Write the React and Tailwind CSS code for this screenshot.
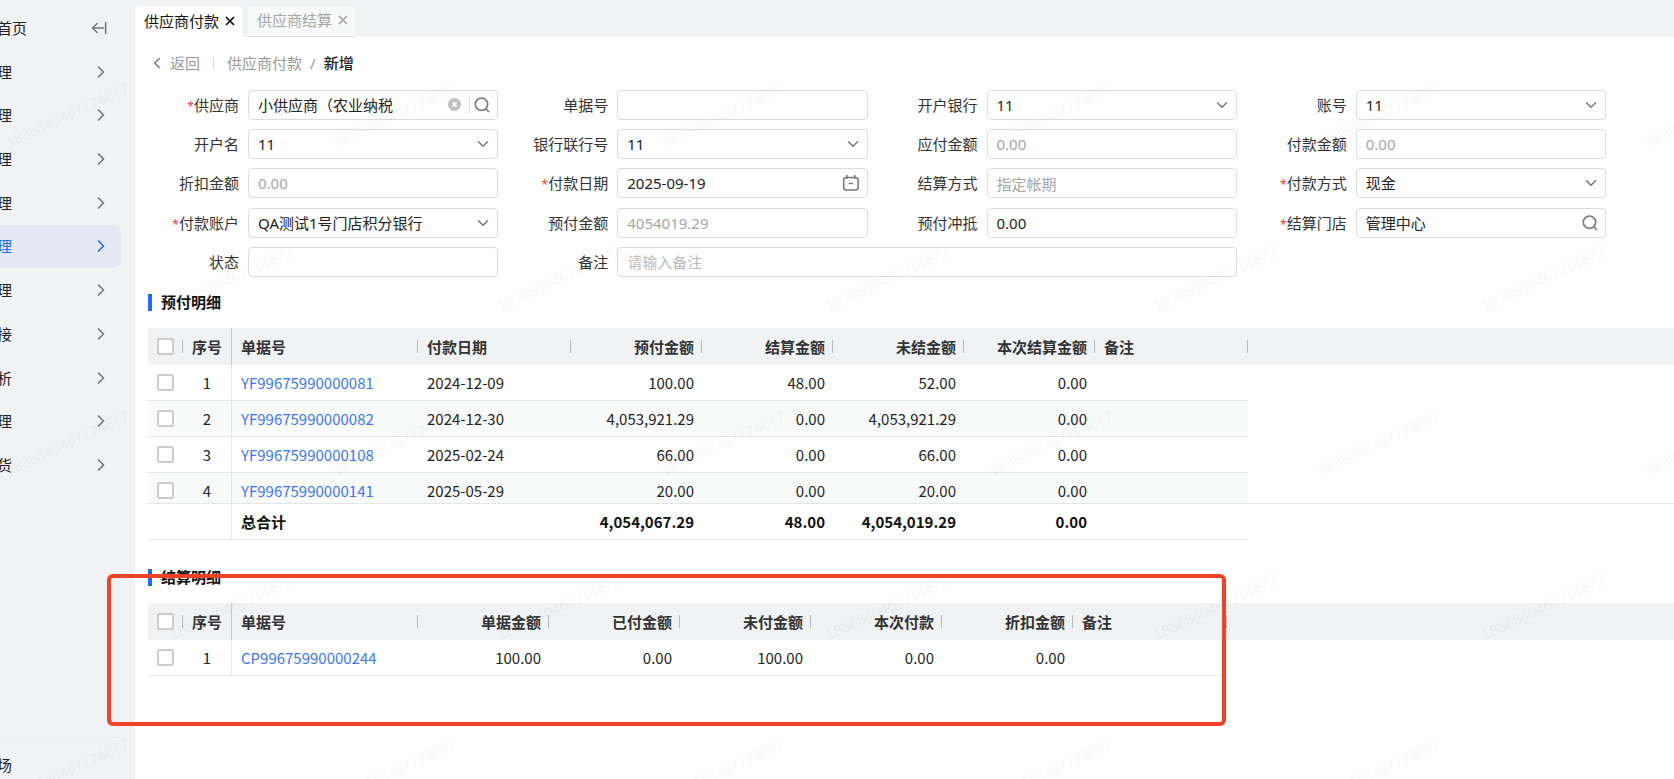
import React from "react";
import { ChevronDown, ChevronLeft, ChevronRight, X } from "lucide-react";

const menus = [
  { name: "首页", home: true },
  { name: "理" },
  { name: "理" },
  { name: "理" },
  { name: "理" },
  { name: "理", active: true },
  { name: "理" },
  { name: "接" },
  { name: "析" },
  { name: "理" },
  { name: "货" },
];

const fields = [
  { id: "supplier", label: "供应商", required: true, type: "search", value: "小供应商（农业纳税", clearable: true },
  { id: "billNo", label: "单据号", value: "", disabled: true },
  { id: "bank", label: "开户银行", type: "select", value: "11" },
  { id: "account", label: "账号", type: "select", value: "11" },
  { id: "accountName", label: "开户名", type: "select", value: "11" },
  { id: "bankCode", label: "银行联行号", type: "select", value: "11" },
  { id: "payable", label: "应付金额", value: "0.00", disabled: true },
  { id: "payAmount", label: "付款金额", value: "0.00", disabled: true },
  { id: "discount", label: "折扣金额", value: "0.00", disabled: true },
  { id: "payDate", label: "付款日期", required: true, type: "date", value: "2025-09-19" },
  { id: "settleType", label: "结算方式", value: "指定帐期", disabled: true },
  { id: "payType", label: "付款方式", required: true, type: "select", value: "现金" },
  { id: "payAccount", label: "付款账户", required: true, type: "select", value: "QA测试1号门店积分银行" },
  { id: "prepaid", label: "预付金额", value: "4054019.29", disabled: true },
  { id: "offset", label: "预付冲抵", value: "0.00" },
  { id: "store", label: "结算门店", required: true, type: "search", value: "管理中心" },
  { id: "status", label: "状态", value: "", disabled: true },
  { id: "remark", label: "备注", value: "", placeholder: "请输入备注", wide: true },
];

const prepayColumns = [
  { key: "no", title: "单据号", width: 186, link: true },
  { key: "date", title: "付款日期", width: 153 },
  { key: "prepay", title: "预付金额", width: 131, right: true },
  { key: "settled", title: "结算金额", width: 131, right: true },
  { key: "unsettled", title: "未结金额", width: 131, right: true },
  { key: "current", title: "本次结算金额", width: 131, right: true },
  { key: "remark", title: "备注", width: 153 },
];

const prepayRows = [
  { no: "YF99675990000081", date: "2024-12-09", prepay: "100.00", settled: "48.00", unsettled: "52.00", current: "0.00" },
  { no: "YF99675990000082", date: "2024-12-30", prepay: "4,053,921.29", settled: "0.00", unsettled: "4,053,921.29", current: "0.00" },
  { no: "YF99675990000108", date: "2025-02-24", prepay: "66.00", settled: "0.00", unsettled: "66.00", current: "0.00" },
  { no: "YF99675990000141", date: "2025-05-29", prepay: "20.00", settled: "0.00", unsettled: "20.00", current: "0.00" },
];

const prepayTotal = {
  no: "总合计",
  prepay: "4,054,067.29",
  settled: "48.00",
  unsettled: "4,054,019.29",
  current: "0.00",
};

const settleColumns = [
  { key: "no", title: "单据号", width: 186, link: true },
  { key: "amount", title: "单据金额", width: 131, right: true },
  { key: "paid", title: "已付金额", width: 131, right: true },
  { key: "unpaid", title: "未付金额", width: 131, right: true },
  { key: "current", title: "本次付款", width: 131, right: true },
  { key: "discount", title: "折扣金额", width: 131, right: true },
  { key: "remark", title: "备注", width: 154 },
];

const settleRows = [
  { no: "CP99675990000244", amount: "100.00", paid: "0.00", unpaid: "100.00", current: "0.00", discount: "0.00" },
];

const SearchIcon = () => (
  <svg width="16" height="16" viewBox="0 0 16 16" fill="none" stroke="#777" strokeWidth="1.6">
    <circle cx="7.5" cy="7.2" r="6.2" />
    <path d="M11.8 11.8 15 15" />
  </svg>
);

const CalendarIcon = () => (
  <svg width="18" height="18" viewBox="0 0 18 18" fill="none" stroke="#777" strokeWidth="1.5">
    <rect x="1.7" y="3.4" width="14.4" height="12.6" rx="2.4" />
    <path d="M5 1v4M12.8 1v4M6.6 9.6h4.4" />
  </svg>
);

const CollapseIcon = () => (
  <svg width="16" height="14" viewBox="0 0 16 14" fill="none" stroke="#777" strokeWidth="1.5">
    <path d="M14.6 1v12M13 7H1.6M6.6 2 1.6 7l5 5" />
  </svg>
);

const ClearIcon = () => (
  <svg width="13" height="13" viewBox="0 0 13 13">
    <circle cx="6.5" cy="6.5" r="6.5" fill="#bfbfbf" />
    <path d="m4.4 4.4 4.2 4.2M8.6 4.4 4.4 8.6" stroke="#fff" strokeWidth="1.5" />
  </svg>
);

const Field = ({ field }) => {
  const { id, label, required, type, value, disabled, placeholder, wide, clearable } = field;
  const box =
    "h-[30px] w-full rounded-[4px] border border-[#d9dbdd] bg-white px-[9px] text-[15px] outline-0 placeholder:text-[#bbb] focus:border-blue-500";

  return (
    <div className={wide ? "col-span-2 flex items-center" : "flex items-center"}>
      <label htmlFor={id} className="w-[100px] shrink-0 pr-[9px] text-right whitespace-nowrap text-[#333]">
        {required && <span className="text-xs text-[#ff3b30]">*</span>}
        {label}
      </label>
      <div className="relative min-w-0 flex-1">
        {type === "select" ? (
          <>
            <select id={id} defaultValue={value} className={`${box} appearance-none text-[#222]`}>
              <option>{value}</option>
            </select>
            <ChevronDown size={18} color="#777" className="pointer-events-none absolute top-[6px] right-[6px]" />
          </>
        ) : (
          <input
            id={id}
            type="text"
            defaultValue={value}
            placeholder={placeholder}
            readOnly={disabled}
            className={`${box} ${disabled ? "text-[#a6a6a6]" : "text-[#222]"}`}
          />
        )}
        {type === "search" && (
          <div className="absolute inset-y-0 right-2 flex items-center">
            {clearable && (
              <button type="button" aria-label="清除" className="mr-1 border-r border-[#ddd] py-[2px] pr-2">
                <ClearIcon />
              </button>
            )}
            <button type="button" aria-label="查询">
              <SearchIcon />
            </button>
          </div>
        )}
        {type === "date" && (
          <button type="button" aria-label="选择日期" className="absolute top-[6px] right-2">
            <CalendarIcon />
          </button>
        )}
      </div>
    </div>
  );
};

const Checkbox = ({ label }) => (
  <input
    type="checkbox"
    aria-label={label}
    className="block size-[17px] appearance-none rounded-[2px] border-2 border-[#ccc] bg-white checked:bg-blue-600"
  />
);

const Separator = () => <span className="absolute top-3 right-0 h-[13px] w-px bg-[#b5b9c0]" />;

const Columns = ({ columns }) => (
  <colgroup>
    <col style={{ width: 35 }} />
    <col style={{ width: 49 }} />
    {columns.map((col) => (
      <col key={col.key} style={{ width: col.width }} />
    ))}
    <col />
  </colgroup>
);

const DetailTable = ({ columns, rows, total, scroll }) => (
  <div className="cjk text-[15px] leading-5 text-[#222]">
    <div className={scroll ? "h-[175px] overflow-hidden" : ""}>
      <table className="w-full table-fixed border-separate border-spacing-0">
        <Columns columns={columns} />
        <thead>
          <tr className="h-[37px] bg-[#f0f2f4] text-[#333]">
            <th className="relative pl-[9px]">
              <Checkbox label="全选" />
              <Separator />
            </th>
            <th className="border-r border-[#c8cbd0] text-center font-bold">序号</th>
            {columns.map((col) => (
              <th
                key={col.key}
                className={`relative font-bold whitespace-nowrap ${col.right ? "pr-2 text-right" : "pl-[9px] text-left"}`}
              >
                {col.title}
                <Separator />
              </th>
            ))}
            <td />
          </tr>
        </thead>
        <tbody>
          {rows.map((row, i) => (
            <tr key={row.no} className="group h-9">
              <td className="border-b border-[#e4e6e8] pl-[9px] group-even:bg-[#f9fbfb]">
                <Checkbox label={`选择 ${row.no}`} />
              </td>
              <td className="border-r border-b border-[#e4e6e8] text-center group-even:bg-[#f9fbfb]">{i + 1}</td>
              {columns.map((col) => (
                <td
                  key={col.key}
                  className={`border-b border-[#e4e6e8] group-even:bg-[#f9fbfb] ${
                    col.right ? "pr-2 text-right" : "pl-[9px] text-left"
                  }`}
                >
                  {col.link ? (
                    <a href="#" className="text-[#3b76f6]">
                      {row[col.key]}
                    </a>
                  ) : (
                    row[col.key]
                  )}
                </td>
              ))}
              <td />
            </tr>
          ))}
        </tbody>
      </table>
    </div>
    {total && (
      <table className="w-full table-fixed border-separate border-spacing-0 border-t border-[#e4e6e8]">
        <Columns columns={columns} />
        <tbody>
          <tr className="h-9 font-bold text-[#111]">
            <td className="border-b border-[#e4e6e8]" />
            <td className="border-r border-b border-[#e4e6e8]" />
            {columns.map((col) => (
              <td
                key={col.key}
                className={`border-b border-[#e4e6e8] ${col.right ? "pr-2 text-right" : "pl-[9px] text-left"}`}
              >
                {total[col.key]}
              </td>
            ))}
            <td />
          </tr>
        </tbody>
      </table>
    )}
  </div>
);

const SectionTitle = ({ children }) => (
  <h2 className="flex h-[46px] items-center pb-[6px] font-bold text-[#111]">
    <span className="mr-[9px] h-[17px] w-1 bg-[#1f6bff]" />
    {children}
  </h2>
);

const nameMarks = [];
for (let i = -4; i <= 1; i++) {
  for (let j = -2; j <= 6; j++) {
    nameMarks.push({ x: 1472 + 418 * i + 92 * j, y: 288 - 25 * i + 155 * j });
  }
}

const Watermark = () => (
  <svg aria-hidden="true" className="pointer-events-none absolute inset-0 h-full w-full font-['Liberation_Sans']">
    <defs>
      <pattern id="phone-mark" width="328" height="328" patternUnits="userSpaceOnUse">
        <g fill="#000" fillOpacity="0.03" fontSize="15">
          <text transform="translate(9 148) rotate(-25)">1836840467774677</text>
          <text transform="translate(173 312) rotate(-25)">1836840467774677</text>
        </g>
      </pattern>
    </defs>
    <rect width="100%" height="100%" fill="url(#phone-mark)" />
    <g className="cjk" fill="#000" fillOpacity="0.01" fontSize="38">
      {nameMarks.map(({ x, y }) => (
        <text key={`${x}-${y}`} transform={`translate(${x} ${y}) rotate(-27)`}>
          胡希凯-9428
        </text>
      ))}
    </g>
  </svg>
);

const App = () => {
  return (
    <div className="relative flex min-h-screen overflow-hidden bg-white font-['Noto_Sans','Noto_Sans_CJK_SC',sans-serif] text-[15px] leading-5 text-[#333] [&_.cjk]:font-['Noto_Sans_CJK_SC',sans-serif]">
      <aside className="flex w-[135px] shrink-0 flex-col justify-between overflow-hidden bg-[#f0f2f4] pt-[6px]">
        <nav className="grid h-[481px] auto-rows-fr pr-[14px]">
          {menus.map((menu, i) => (
            <a
              key={i}
              href="#"
              className={`-ml-[3px] flex items-center justify-between rounded-r-lg ${
                menu.active ? "bg-[#e6e9f5] text-[#2468f2]" : "text-[#222]"
              }`}
            >
              {menu.name}
              {menu.home ? (
                <span className="pr-[14px]">
                  <CollapseIcon />
                </span>
              ) : (
                <ChevronRight size={20} color={menu.active ? "#2468f2" : "#777"} className="mr-[10px]" />
              )}
            </a>
          ))}
        </nav>
        <a href="#" className="mr-[14px] -ml-[3px] border-t border-[#eaecef] pt-[17px] pb-1 text-[#222]">
          场
        </a>
      </aside>

      <main className="min-w-0 flex-1">
        <div className="flex h-[37px] items-end gap-[6px] bg-[#f0f2f4]">
          <div className="flex h-[31px] items-center gap-1 rounded-t-[4px] bg-white pr-[5px] pb-[2px] pl-[9px] text-[#111]">
            供应商付款
            <button type="button" aria-label="关闭 供应商付款">
              <X size={14} strokeWidth={3} />
            </button>
          </div>
          <div className="flex h-[31px] items-center gap-1 rounded-t-[4px] border-b border-[#dcdee0] bg-[#f8f9f9] pr-[5px] pb-[2px] pl-[9px] text-[#a6a6a6]">
            供应商结算
            <button type="button" aria-label="关闭 供应商结算">
              <X size={14} strokeWidth={3} />
            </button>
          </div>
        </div>

        <div className="pl-[13px]">
          <div className="flex h-12 items-center pt-1 text-[#999]">
            <button type="button" className="flex items-center gap-1">
              <ChevronLeft size={18} color="#777" />
              返回
            </button>
            <span className="mx-[13px] h-3 w-px bg-[#ddd]" />
            <a href="#">供应商付款</a>
            <span className="mx-2">/</span>
            <span className="font-medium text-[#222]">新增</span>
          </div>

          <form className="grid h-[197px] auto-rows-fr grid-cols-4 gap-x-[19px] pr-[68px]">
            {fields.map((field) => (
              <Field key={field.id} field={field} />
            ))}
          </form>

          <SectionTitle>预付明细</SectionTitle>
          <DetailTable columns={prepayColumns} rows={prepayRows} total={prepayTotal} scroll />

          <div className="pt-[17px]">
            <SectionTitle>结算明细</SectionTitle>
            <DetailTable columns={settleColumns} rows={settleRows} />
          </div>
        </div>
      </main>

      <Watermark />
      <div className="pointer-events-none absolute top-[574px] left-[107px] h-[152px] w-[1119px] rounded-[6px] border-4 border-[#ef4226]" />
    </div>
  );
};

export default App;
